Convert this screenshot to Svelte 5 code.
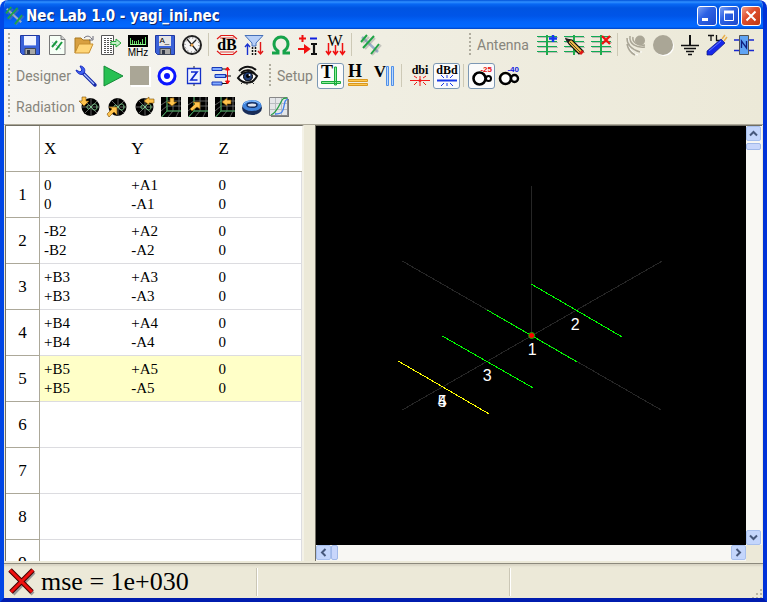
<script>
	let selected = $state(5);
	let polarization = $state('tilt');
	let reference = $state('dBd');
	let scale = $state('s25');

	const wires = [
		{ id: 1, x: ['0', '0'], y: ['+A1', '-A1'], z: ['0', '0'] },
		{ id: 2, x: ['-B2', '-B2'], y: ['+A2', '-A2'], z: ['0', '0'] },
		{ id: 3, x: ['+B3', '+B3'], y: ['+A3', '-A3'], z: ['0', '0'] },
		{ id: 4, x: ['+B4', '+B4'], y: ['+A4', '-A4'], z: ['0', '0'] },
		{ id: 5, x: ['+B5', '+B5'], y: ['+A5', '-A5'], z: ['0', '0'] },
		{ id: 6 },
		{ id: 7 },
		{ id: 8 },
		{ id: 9 }
	];

	const floppy = `<path d="M.5 .5h19v19H2.5l-2-2z" fill="#3a62d8" stroke="#2038a0"/><path d="M4 1h12v10H4z" fill="#f0f4ff"/><path d="M4 10.5h12" stroke="#7f9cf0"/><path d="M5 13.500h10.500v6H5z" fill="#a8a8a8" stroke="#404858"/><path d="M7 15h3v4H7z" fill="#303848"/>`;
	const grid = `<path d="M1 2.500h20M1 7.500h20M1 12.500h20M1 17.500h20" stroke="#666" stroke-opacity=".35"/><path d="M0 1.500h20M0 6.500h20M0 11.500h20M0 16.500h20" stroke="#1a5"/><path d="M10 0v20" stroke="#1fab4c" stroke-width="2"/>`;
	const polar = `<circle cx="10.500" cy="10" r="9" fill="#000"/><path d="M2 10h17M11 1v18M5 4l12 12M5 16L17 4" stroke="#888" stroke-width=".7"/><path d="M11 10c2-4 6-4 6 0s-4 4-6 0zM11 10c-2-3-4-2-4 0s2 3 4 0z" fill="none" stroke="#7fd090"/>`;
	const cage = `<path d="M0 0h20v20H0z" fill="#000"/><path d="M6 0v14M12 0v14M18 0v14M6 4h14M6 9h14M6 14h14M0 20l6-6M7 20l5-6M15 20l3-6M0 14l6-5M0 8l6-4" stroke="#777" stroke-width=".8"/><path d="M6 0v14h14M1 20l5-6" stroke="#37a050" fill="none"/>`;
	const gold = `fill="#ffc34d" stroke="#7a4d00" stroke-width=".6"`;

	const icons = {
		save: floppy,
		model: `<path d="M2.500 .5H14l4 4v15H2.500z" fill="#f6fff6" stroke="#777"/><path d="M14 .5v4h4" fill="#ccc" stroke="#777"/><path d="M5 7l9 7" stroke="#9bb8cc"/><path d="M5 12l5-6M9 15l6-8" stroke="#1a9a40" stroke-width="2"/>`,
		open: `<path d="M1 18V3h6l2 2h7v4" fill="#d8a040" stroke="#a87820"/><path d="M1 18l4-9h14l-4 9z" fill="#ffd678" stroke="#c89030"/><path d="M10 3c3-3 6-2 8 1M19 1v4h-4" fill="none" stroke="#667"/>`,
		exportFile: `<path d="M.5 .5h12v19H.5z" fill="#fff" stroke="#555"/><path d="M3 3.500h8M3 5.500h8M3 7.500h8M3 9.500h8M3 11.500h8M3 13.500h8M3 15.500h8M3 17.500h8" stroke="#555" stroke-dasharray="2 1"/><path d="M10 6.500h5V4l5 4-5 4V9.500h-5z" fill="#c6f0c8" stroke="#27a83c"/>`,
		mhz: `<path d="M0 0h20v12H0z" fill="#000"/><path d="M2 9.500h16" stroke="#9f9"/><path d="M2.500 9V3M4.500 9V5M6.500 9V6M8.500 9V6M10.500 9V5M12.500 9V7M14.500 9V4M17.500 9V2" stroke="#6d6"/><text x="10" y="21" text-anchor="middle" font-family="Liberation Sans, sans-serif" font-size="10">MHz</text>`,
		saveAs: `${floppy}<path d="M4 1h12v10H4z" fill="#e4e4e4"/><text x="4.500" y="8" font-family="Liberation Sans, sans-serif" font-size="8">A_</text>`,
		clock: `<circle cx="10" cy="10" r="9" fill="#f6f6f6" stroke="#222" stroke-width="2"/><circle cx="10" cy="10" r="7" fill="none" stroke="#555" stroke-dasharray="1 2.660"/><path d="M5 4l10 12M8 11l6-6" stroke="#222" stroke-width="1.300"/><circle cx="10" cy="10" r="1.500" fill="#d94"/>`,
		db: `<path d="M0 4l4-3.500h12L20 4M0 16l4 3.500h12l4-3.500" fill="none" stroke="#e01818" stroke-width="1.200"/><path d="M3 3h14M3 17h14" stroke="#e01818" stroke-width=".8"/><text x="10" y="15" text-anchor="middle" font-family="Liberation Serif, serif" font-weight="bold" font-size="16">dB</text>`,
		filter: `<path d="M1 .5h18L12 8v3H8V8z" fill="#b8d0f8" stroke="#4670b8"/><path d="M3.500 20V9M1 12l2.500-3L6 12" stroke="#1830d0" stroke-width="1.400" fill="none"/><path d="M8.500 12v8M11.500 12v8" stroke="#111" stroke-width="1.500" stroke-dasharray="2 1"/><path d="M16.500 7v11M14 16l2.500 3 2.500-3" stroke="#e01818" stroke-width="1.400" fill="none"/>`,
		omega: `<path d="M1 18h6v-2C4 14 3 12 3 9c0-4 3-7 7-7s7 3 7 7c0 3-1 5-4 7v2h6" fill="none" stroke="#16a34a" stroke-width="3"/>`,
		current: `<path d="M1 3.500h7M4.500 0v7" stroke="#f01010" stroke-width="2"/><path d="M12 3.500h7" stroke="#1020e0" stroke-width="2"/><path d="M0 14h10M7 11l4 3-4 3z" stroke="#f01010" stroke-width="2" fill="#f01010"/><path d="M13 9h6M13 19h6M16 9v10" stroke="#111" stroke-width="2.200"/>`,
		wind: `<text x="10" y="11" text-anchor="middle" font-family="Liberation Serif, serif" font-size="16">W</text><path d="M3.500 8v11M1 16l2.500 3.500L6 16M10.500 10v9M8 16l2.500 3.500L13 16M17.500 8v11M15 16l2.500 3.500L20 16" fill="none" stroke="#f01010" stroke-width="1.500"/>`,
		yagi: `<path d="M2 2l16 15" stroke="#9cb0c8" stroke-width="2.500"/><path d="M2 7l6-6M4 13L14 2M11 19l9-10" stroke="#888" stroke-width="2" transform="translate(1 1)" stroke-opacity=".4"/><path d="M1 7l6-7M3 13L14 1M11 19l8-10" stroke="#1fa345" stroke-width="2"/>`,
		addWire: `${grid}<path d="M12 3.500h8M16 0v7" stroke="#1638f0" stroke-width="2.500"/>`,
		editWire: `${grid}<path d="M2 4l3 5 10 10 4-3L8 5z" fill="#f3bd48" stroke="#111" stroke-width="1.200"/><path d="M1 3l6 2-3 3z" fill="#222"/><path d="M6 7l10 10" stroke="#222" stroke-width=".8"/><path d="M15 18l3-3 2 2-3 3z" fill="#e01818"/>`,
		deleteWire: `${grid}<path d="M11 1l8 8M19 1l-8 8" stroke="#f01010" stroke-width="2.300"/>`,
		waves: `<path d="M2 9c1 5 5 10 10 11M2 4c0 8 6 13 14 13" fill="none" stroke="#fff"/><circle cx="14" cy="5.500" r="5" fill="#aaa696"/><path d="M1 9c1 5 4 9 8 11M1 3c0 8 6 12 13 14M4 1c-1 8 6 12 15 11M7 2c-1 5 4 9 12 8" fill="none" stroke="#aaa696" stroke-width="1.500"/>`,
		sphere: `<circle cx="11" cy="11" r="10" fill="#fff"/><circle cx="10" cy="10" r="10" fill="#aaa696"/>`,
		ground: `<path d="M10 0v11" stroke="#111" stroke-width="2"/><path d="M1 10.500h18M4 13.500h12M6 16.500h8M8 19.500h4" stroke="#111" stroke-width="1.500"/>`,
		line: `<path d="M1 .5h6M4 1v5M9.500 0v5.500H13" stroke="#111" fill="none" stroke-width="1.300"/><path d="M0 20v-4L14 4l4 4L5 20z" fill="#1728ea" stroke="#101878" stroke-width=".7"/><path d="M2 16L14 6" stroke="#6478ff"/><path d="M15 4l3-4M17 6l3-4" stroke="#e8b050" stroke-width="1.500"/>`,
		network: `<path d="M0 5h20M0 15.500h20" stroke="#1728d0" stroke-width="1.400"/><path d="M5.500 .5h9v19h-9z" fill="#60a4f4" stroke="#555"/><path d="M7.500 13V6l5 7V6" stroke="#102080" fill="none" stroke-width="1.300"/>`,
		wrench: `<path d="M7 7l12 12" stroke="#1528a8" stroke-width="3.500" stroke-linecap="round"/><path d="M8 8l10 10" stroke="#a8c0ff" stroke-width="1.200"/><path d="M4 0c4 0 6 4 4 7S1 8 0 4l4 2 2-2z" fill="#3f62f0" stroke="#1528c0"/>`,
		run: `<path d="M1 0l19 10L1 20z" fill="#28c052" stroke="#168c38"/>`,
		stop: `<path d="M1 1h20v20H1z" fill="#fff"/><path d="M0 0h19v19H0z" fill="#aaa696"/>`,
		target: `<circle cx="10" cy="10" r="8" fill="#fff" stroke="#0b16ff" stroke-width="3"/><circle cx="10" cy="10" r="3" fill="#0b16ff"/>`,
		impedance: `<path d="M10 0v20" stroke="#222"/><path d="M3.500 2.500h13v15h-13z" fill="#eef2ff" stroke="#1530c8" stroke-width="1.300"/><path d="M7 6h6l-6 8h6.500" fill="none" stroke="#1028d0" stroke-width="1.700"/>`,
		spacing: `<path d="M1 1.500h10v3H1zM4 8.500h11v3H4zM1 16h10v3H1z" fill="#82abff" stroke="#1838b8"/><path d="M11 3h6M14 10h6M11 17.500h6" stroke="#111"/><path d="M16.500 2v16M14.500 4l2-3 2 3zM14.500 15l2 3 2-3z" stroke="#f01010" fill="#f01010"/>`,
		eye: `<path d="M1 5c5-6 13-5 17-1M3 7c4-4 10-4 14 1" fill="none" stroke="#111" stroke-width="1.800"/><path d="M0 12c5-8 14-7 19-2-4 8-13 9-19 2z" fill="#fff" stroke="#111" stroke-width="2"/><circle cx="10" cy="10.500" r="4.500" fill="#244078" stroke="#000"/><circle cx="10" cy="10" r="2" fill="#000"/><circle cx="11.500" cy="9" r="1" fill="#fff"/><path d="M5 16l-2 2M9 17v2M14 16l2 2" stroke="#333"/>`,
		tilt: `<text x="6" y="12" text-anchor="middle" font-family="Liberation Serif, serif" font-size="18" font-weight="bold">T</text><path d="M.5 15.500h19v2H.5zM13.500 1h2v18h-2z" fill="#8ff09a" stroke="#16a83c"/>`,
		horizontal: `<text x="7" y="11" text-anchor="middle" font-family="Liberation Serif, serif" font-size="18" font-weight="bold">H</text><path d="M.5 13.500h19v2H.5zM.5 17.500h19v2H.5z" fill="#ffc850" stroke="#d89820"/>`,
		vertical: `<text x="5" y="11" text-anchor="middle" font-family="Liberation Serif, serif" font-size="17" font-weight="bold">V</text><path d="M11.500 .5h2v19h-2zM16.500 .5h2v19h-2z" fill="#b8d8ff" stroke="#5090e8"/>`,
		dbi: `<text x="10" y="8" text-anchor="middle" font-family="Liberation Serif, serif" font-size="12" font-weight="bold">dbi</text><path d="M0 14.500h9M11 14.500h9M10 10v3M10 16v4M4 10l3 2M16 10l-3 2M4 19l3-3M16 19l-3-3" stroke="#f01818"/><circle cx="10" cy="14.500" r="1.500" fill="#f01818"/>`,
		dBd: `<text x="10" y="8" text-anchor="middle" font-family="Liberation Serif, serif" font-size="12" font-weight="bold">dBd</text><path d="M0 14.500h20" stroke="#1838e8" stroke-width="2"/><path d="M10 9v3M10 17v3M4 9l3 3M16 9l-3 3M4 20l3-3M16 20l-3-3" stroke="#1838e8"/>`,
		s25: `<circle cx="7.500" cy="12.500" r="6" fill="#fff" stroke="#000" stroke-width="2.600"/><circle cx="16.500" cy="12.500" r="2.500" fill="#fff" stroke="#000" stroke-width="2"/><text x="20" y="6" text-anchor="end" font-family="Liberation Sans, sans-serif" font-size="8" font-weight="bold" fill="#e81010">-25</text>`,
		s40: `<circle cx="6.500" cy="12.500" r="5.500" fill="#fff" stroke="#000" stroke-width="2.600"/><circle cx="15.500" cy="12.500" r="3.500" fill="#fff" stroke="#000" stroke-width="2.400"/><text x="20" y="6" text-anchor="end" font-family="Liberation Sans, sans-serif" font-size="8" font-weight="bold" fill="#1020e0">-40</text>`,
		polarTop: `${polar}<path d="M2 0h4v4h3L4 9-1 4h3z" ${gold}/>`,
		polarSide: `${polar}<path d="M0 17l5-5-3-2h8v8l-3-3-5 5z" ${gold}/>`,
		polarFront: `${polar}<path d="M20 2h-5V0l-5 4 5 4V6h5z" ${gold}/>`,
		cageTop: `${cage}<path d="M9 1h4v4h3l-5 4-5-4h3z" ${gold}/>`,
		cageSide: `${cage}<path d="M2 12l5-5-2-2h7v7l-3-2-5 4z" ${gold}/>`,
		cageFront: `${cage}<path d="M16 3h-4V1L7 5l5 4V7h4z" ${gold}/>`,
		torus: `<ellipse cx="10" cy="11" rx="10" ry="7" fill="#182c58"/><ellipse cx="10" cy="8.500" rx="9.500" ry="5.500" fill="#4084dc"/><ellipse cx="10" cy="8" rx="5" ry="2.300" fill="#dfe4ee" stroke="#163064" stroke-width="1.500"/><path d="M2 7c3-4 12-4 16 0" fill="none" stroke="#8fc4ff"/>`,
		graph: `<path d="M2 2h18v18H2z" fill="#777"/><path d="M.5 .5h18v18H.5z" fill="#e4e6e8" stroke="#888"/><path d="M6.500 1v17M12.500 1v17M1 6.500h17M1 12.500h17" stroke="#b8bcc0"/><path d="M2 18c5-2 8-9 10-13s3-4 6-4" fill="none" stroke="#28a048" stroke-width="1.300"/><path d="M6 17c8 0 8-3 9-8s1-6 4-7" fill="none" stroke="#4080f0" stroke-width="1.300"/>`
	};

	const fileTools = [
		['save', 'Save'], ['model', 'New antenna'], ['open', 'Open'], ['exportFile', 'Export'],
		['mhz', 'Frequency'], ['saveAs', 'Save as'], ['clock', 'Timer']
	];
	const resultTools = [
		['db', 'Gain'], ['filter', 'Front to back'], ['omega', 'Impedance'], ['current', 'Currents'], ['wind', 'Power']
	];
	const wireTools = [['addWire', 'Add wire'], ['editWire', 'Edit wire'], ['deleteWire', 'Delete wire']];
	const partTools = [
		['waves', 'Excitation'], ['sphere', 'Load'], ['ground', 'Ground'], ['line', 'Transmission line'], ['network', 'Network']
	];
	const designTools = [
		['wrench', 'Options'], ['run', 'Run'], ['stop', 'Stop'], ['target', 'Target'],
		['impedance', 'Impedance goal'], ['spacing', 'Element spacing'], ['eye', 'Preview']
	];
	const radiationTools = [
		['polarTop', 'Polar top'], ['polarSide', 'Polar side'], ['polarFront', 'Polar front'], ['cageTop', '3D top'],
		['cageSide', '3D side'], ['cageFront', '3D front'], ['torus', 'Pattern'], ['graph', 'Graph']
	];
	const disabled = ['waves', 'sphere', 'stop'];
</script>

<svelte:head>
	<title>Nec Lab 1.0 - yagi_ini.nec</title>
</svelte:head>

{#snippet tool(name, label, on = false, click = undefined)}
	<button class="tool" class:on title={label} aria-label={label} disabled={disabled.includes(name)} onclick={click}>
		<svg viewBox="0 0 20 20">{@html icons[name]}</svg>
	</button>
{/snippet}

{#snippet tools(list)}
	{#each list as [name, label]}
		{@render tool(name, label)}
	{/each}
{/snippet}

{#snippet arrow(dir, label)}
	<button class="arrow {dir}" aria-label={label}>
		<svg viewBox="0 0 9 9"><path d="M1 2.500l3.500 3.500L8 2.500" /></svg>
	</button>
{/snippet}

<div class="window">
	<header>
		<svg class="logo" viewBox="0 0 20 20">{@html icons.yagi}</svg>
		<h1>Nec Lab 1.0 - yagi_ini.nec</h1>
		<button class="caption" aria-label="Minimize"><svg viewBox="0 0 18 18"><path d="M4 12.500h6" stroke-width="3" /></svg></button>
		<button class="caption" aria-label="Maximize"><svg viewBox="0 0 18 18"><path d="M4.500 4.500h9v9h-9z" /><path d="M4 5h10" stroke-width="3" /></svg></button>
		<button class="caption close" aria-label="Close"><svg viewBox="0 0 18 18"><path d="M4.500 4.500l9 9M13.500 4.500l-9 9" stroke-width="2" /></svg></button>
	</header>

	<div class="bars">
		<div class="bar">
			<i class="grip"></i>
			{@render tools(fileTools)}
			<i class="sep"></i>
			{@render tools(resultTools)}
			<i class="sep"></i>
			{@render tool('yagi', 'Antenna view')}
			<div class="group end">
				<i class="grip"></i>
				<span class="name">Antenna</span>
				{@render tools(wireTools)}
				<i class="sep"></i>
				{@render tools(partTools)}
			</div>
		</div>
		<div class="bar">
			<i class="grip"></i>
			<span class="name">Designer</span>
			{@render tools(designTools)}
			<div class="group">
				<i class="grip"></i>
				<span class="name short">Setup</span>
				{@render tool('tilt', 'Total', polarization === 'tilt', () => polarization = 'tilt')}
				{@render tool('horizontal', 'Horizontal', polarization === 'horizontal', () => polarization = 'horizontal')}
				{@render tool('vertical', 'Vertical', polarization === 'vertical', () => polarization = 'vertical')}
				<i class="sep"></i>
				{@render tool('dbi', 'dBi', reference === 'dbi', () => reference = 'dbi')}
				{@render tool('dBd', 'dBd', reference === 'dBd', () => reference = 'dBd')}
				<i class="sep"></i>
				{@render tool('s25', 'Scale -25 dB', scale === 's25', () => scale = 's25')}
				{@render tool('s40', 'Scale -40 dB', scale === 's40', () => scale = 's40')}
			</div>
		</div>
		<div class="bar">
			<i class="grip"></i>
			<span class="name wide">Radiation</span>
			{@render tools(radiationTools)}
		</div>
	</div>

	<main>
		<div class="wires">
			<table>
				<thead>
					<tr><th class="num"></th><th>X</th><th>Y</th><th>Z</th></tr>
				</thead>
				<tbody>
					{#each wires as wire}
						<tr class:selected={wire.id === selected} onclick={() => selected = wire.id}>
							<th class="num" scope="row">{wire.id}</th>
							{#each ['x', 'y', 'z'] as axis}
								<td>
									{#each wire[axis] ?? [] as value}
										<div>{value}</div>
									{/each}
								</td>
							{/each}
						</tr>
					{/each}
				</tbody>
			</table>
		</div>

		<div class="view">
			<div class="canvas">
				<svg viewBox="0 0 430 419" role="img" aria-label="Antenna geometry">
					<g class="axes">
						<path d="M215.500 60v150M86 135l259 149M346 135L86 284" />
					</g>
					<g class="elements">
						<path d="M171 184l90 52M215 158l91 53M126 210l91 52" />
						<path class="active" d="M82 235l91 53" />
					</g>
					<circle cx="215.500" cy="209.500" r="3" />
					<g class="labels">
						<text x="216" y="229">1</text>
						<text x="259" y="204">2</text>
						<text x="171" y="255">3</text>
						<text x="126" y="281">4</text>
						<text x="126" y="281">5</text>
					</g>
				</svg>
			</div>
			<div class="scroll vertical">
				{@render arrow('up', 'Scroll up')}
				<i class="thumb"></i>
				{@render arrow('down', 'Scroll down')}
			</div>
			<div class="scroll horizontal">
				{@render arrow('left', 'Scroll left')}
				<i class="thumb"></i>
				{@render arrow('right', 'Scroll right')}
			</div>
		</div>
	</main>

	<footer>
		<div class="mse">
			<svg viewBox="0 0 28 28"><path class="shade" d="M4 4l21 22M26 4L5 26" /><path class="edge" d="M2 2l22 22M25 2L3 24" /><path class="cross" d="M2 2l22 22M25 2L3 24" /></svg>
			<span>mse = 1e+030</span>
		</div>
		<div></div>
		<div class="size"><svg viewBox="0 0 12 12"><path d="M9 1h2v2H9zM5 5h2v2H5zM9 5h2v2H9zM1 9h2v2H1zM5 9h2v2H5zM9 9h2v2H9z" /></svg></div>
	</footer>
</div>

<style>
	:global(body) {
		margin: 0;
		background: #fff;
	}

	.window {
		display: flex;
		flex-direction: column;
		height: 100vh;
		box-sizing: border-box;
		border-style: solid;
		border-width: 0 4px 4px;
		border-color: #0050ea #0032d8 #001cae #0046e6;
		border-radius: 8px 8px 0 0;
		background: #ece9d8;
		overflow: hidden;
		font-family: "Liberation Serif", serif;
	}

	button {
		padding: 0;
		border: 0;
		background: none;
	}

	svg {
		display: block;
		overflow: visible;
	}

	header {
		display: flex;
		align-items: center;
		flex: none;
		gap: 2px;
		height: 29px;
		margin: 0 -4px;
		padding: 2px 6px 0 5px;
		box-sizing: border-box;
		background: linear-gradient(#0050d8 0, #3090ff 2px, #0868f4 4px, #0054e2 8px, #0055e8 16px, #0264fa 22px, #0268ff 27px, #0042c4 29px);
	}

	.logo {
		width: 18px;
		height: 18px;
	}

	h1 {
		flex: 1;
		margin: 0 0 0 1px;
		color: #fff;
		font: bold 15px/20px "DejaVu Sans Condensed", "Noto Sans", sans-serif;
		text-shadow: 1px 1px #0a246a;
		white-space: nowrap;
	}

	.caption {
		width: 20px;
		height: 20px;
		box-sizing: border-box;
		border: 1px solid #fff;
		border-radius: 3px;
		background: linear-gradient(135deg, #7ba0f4, #2d62e4 40%, #1c48cc);
	}

	.caption.close {
		background: linear-gradient(135deg, #f0a088, #e05030 40%, #c03810);
	}

	.caption path {
		fill: none;
		stroke: #fff;
	}

	.bars {
		flex: none;
		padding-bottom: 2px;
		background: linear-gradient(to right, #f6f5f1, #f0eee2 50%, #ece9d8);
	}

	.bar, .group {
		display: flex;
		align-items: center;
		height: 31px;
	}

	.bar {
		padding-left: 4px;
	}

	.group {
		margin-left: 8px;
	}

	.group.end {
		margin: 0 6px 0 auto;
	}

	.grip {
		flex: none;
		width: 2px;
		height: 24px;
		margin-right: 6px;
		background: repeating-linear-gradient(#b0ad9f 0 2px, transparent 2px 4px);
	}

	.sep {
		flex: none;
		width: 1px;
		height: 23px;
		margin: 0 4px 0 3px;
		background: #cdc9b6;
	}

	.name {
		width: 56px;
		color: #87857c;
		font: 14px/20px Roboto, sans-serif;
		white-space: nowrap;
	}

	.name.short {
		width: 40px;
	}

	.name.wide {
		width: 60px;
	}

	.tool {
		display: flex;
		align-items: center;
		justify-content: center;
		flex: none;
		width: 27px;
		height: 26px;
		border: 1px solid transparent;
		border-radius: 3px;
	}

	.tool svg {
		width: 20px;
		height: 20px;
	}

	.tool.on {
		border-color: #7c98b4;
		background: #fbfbfb;
	}

	main {
		display: flex;
		flex: 1;
		gap: 11px;
		min-height: 0;
		padding-right: 1px;
		border-top: 1px solid #aca899;
	}

	.wires {
		flex: 0 0 39.4%;
		box-sizing: border-box;
		margin-left: 1px;
		border: 1px solid #716f64;
		border-width: 1px 0 0 1px;
		border-right: 2px solid #f4f2e8;
		background: #fff;
		overflow: hidden;
	}

	table {
		width: 100%;
		border-collapse: separate;
		border-spacing: 0;
		table-layout: fixed;
		font-size: 15px;
		line-height: 19px;
	}

	th, td {
		height: 46px;
		box-sizing: border-box;
		padding: 0 0 0 4px;
		border-bottom: 1px solid #dcdce0;
		text-align: left;
		vertical-align: middle;
	}

	thead th {
		border-color: #aca899;
	}

	th {
		font-weight: normal;
		font-size: 17px;
	}

	td:last-child {
		border-right: 1px solid #dcdce0;
	}

	.num {
		width: 34px;
		padding: 0;
		border-right: 1px solid #aca899;
		border-bottom-color: #aca899;
		text-align: center;
	}

	.selected td {
		background: #ffffc8;
	}

	.view {
		display: grid;
		flex: 1;
		grid-template: 1fr 16px / 1fr 16px;
		min-width: 0;
		border: 1px solid #716f64;
		border-width: 1px 0 0 1px;
	}

	.canvas {
		min-width: 0;
		min-height: 0;
		background: #000;
		overflow: hidden;
	}

	.canvas svg {
		width: 100%;
		height: 100%;
	}

	.axes, .elements {
		fill: none;
		shape-rendering: crispEdges;
	}

	.axes {
		stroke: #262626;
	}

	.elements {
		stroke: #0f0;
	}

	.elements .active {
		stroke: #ff0;
	}

	circle {
		fill: #f00;
		stroke: #0b0;
	}

	.labels {
		fill: #fff;
		font: 16px "Liberation Sans", sans-serif;
		text-anchor: middle;
	}

	.scroll {
		display: flex;
		background: #f8f7f3;
	}

	.scroll.vertical {
		flex-direction: column;
	}

	.arrow {
		display: flex;
		align-items: center;
		justify-content: center;
		flex: none;
		width: 15px;
		height: 15px;
		border: 1px solid #a8c0ee;
		border-radius: 2px;
		background: #c4d6fc;
	}

	.arrow svg {
		width: 9px;
		height: 9px;
	}

	.arrow path {
		fill: none;
		stroke: #46587c;
		stroke-width: 2;
	}

	.arrow.up svg { transform: rotate(180deg); }
	.arrow.left svg { transform: rotate(90deg); }
	.arrow.right svg { transform: rotate(-90deg); }

	.arrow.down {
		margin-top: auto;
	}

	.arrow.right {
		margin-left: auto;
	}

	.thumb {
		box-sizing: border-box;
		width: 7px;
		height: 15px;
		border: 1px solid #a0b8e8;
		border-radius: 2px;
		background: #c8d6fb;
	}

	.vertical .thumb {
		width: 15px;
		height: 7px;
		margin-top: 2px;
	}

	footer {
		display: grid;
		grid-template-columns: 1fr 1fr 1fr;
		flex: none;
		height: 34px;
		margin-top: 2px;
		border-top: 1px solid #8c897c;
		box-shadow: inset 0 2px 2px #d8d4c4;
	}

	footer > div {
		margin: 4px 0;
		border-right: 1px solid #cbc7b6;
		box-shadow: 1px 0 #fff;
	}

	.mse {
		display: flex;
		align-items: center;
		gap: 5px;
		padding-left: 4px;
		font-size: 26px;
		line-height: 26px;
		white-space: nowrap;
	}

	.mse svg {
		width: 28px;
		height: 28px;
	}

	.shade { stroke: #999; stroke-width: 4; }
	.edge { stroke: #400; stroke-width: 5; }
	.cross { stroke: #f01010; stroke-width: 3; }

	footer .size {
		display: flex;
		align-items: flex-end;
		justify-content: flex-end;
		margin-bottom: 0;
		border: 0;
		box-shadow: none;
	}

	.size svg {
		width: 12px;
		height: 12px;
		fill: #b8b4a2;
	}
</style>
